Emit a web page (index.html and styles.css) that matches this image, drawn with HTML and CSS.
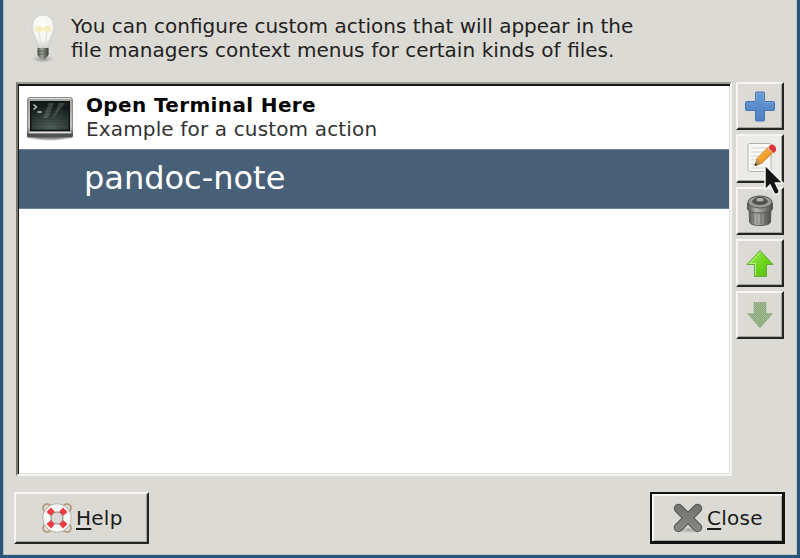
FILE: index.html
```html
<!DOCTYPE html>
<html lang="en">
<head>
<meta charset="utf-8">
<title>Custom Actions</title>
<link rel="stylesheet" href="styles.css">
</head>
<body>
<main class="window">
  <header class="intro">
    <svg class="bulb" width="32" height="52" viewBox="0 0 32 52">
      <defs>
        <radialGradient id="glass" cx=".5" cy=".35" r=".65"><stop offset="0" stop-color="#fff"/><stop offset=".65" stop-color="#f3f3f0"/><stop offset="1" stop-color="#d0d0cd"/></radialGradient>
        <linearGradient id="cap"><stop offset="0" stop-color="#4b5049"/><stop offset=".4" stop-color="#a3a99d"/><stop offset="1" stop-color="#30342f"/></linearGradient>
        <radialGradient id="shade"><stop offset="0" stop-color="#555" stop-opacity=".6"/><stop offset="1" stop-color="#777" stop-opacity="0"/></radialGradient>
      </defs>
      <ellipse cx="16" cy="46" rx="11" ry="4" fill="url(#shade)"/>
      <path d="M16 2C9 2 5 7.500 5 14c0 7 5 11 5.500 21h11C22 25 27 21 27 14 27 7.500 23 2 16 2z" fill="url(#glass)" stroke="#cfcfcc" stroke-width="1"/>
      <path d="M12 17l2 17M20 17l-2 17" fill="none" stroke="#e0e0dc"/>
      <ellipse cx="12" cy="16" rx="4" ry="3" fill="#f5efbd"/><ellipse cx="20" cy="16" rx="4" ry="3" fill="#f5efbd"/>
      <path d="M10.500 35h11v7l-2.500 3-3 1.500-3-1.500-2.500-3z" fill="url(#cap)"/><path d="M10.500 38.500l11-1M10.500 41.500l11-1" stroke="#555c50" stroke-width=".8"/>
    </svg>
    <p class="message"><span class="line-one">You can configure custom actions that will appear in the</span><br><span class="line-two">file managers context menus for certain kinds of files.</span></p>
  </header>

  <section class="editor">
    <div class="list">
      <div class="row">
        <svg class="terminal" width="50" height="46" viewBox="0 0 50 46">
          <defs>
            <linearGradient id="frame" x2="0" y2="1"><stop offset="0" stop-color="#a2a39f"/><stop offset=".8" stop-color="#c4c5c1"/><stop offset="1" stop-color="#777"/></linearGradient>
            <radialGradient id="screen" cx=".5" cy="1" r=".9"><stop offset="0" stop-color="#556660"/><stop offset=".6" stop-color="#2f3b38"/><stop offset="1" stop-color="#151d1c"/></radialGradient>
            <radialGradient id="drop"><stop offset=".5" stop-color="#333" stop-opacity=".55"/><stop offset="1" stop-color="#777" stop-opacity="0"/></radialGradient>
          </defs>
          <ellipse cx="25" cy="41" rx="25" ry="4" fill="url(#drop)"/>
          <rect x="2" y="34" width="46" height="7.500" rx="1.500" fill="#50524f"/>
          <rect x="2.500" y="1.500" width="45" height="36" rx="2.500" fill="url(#frame)" stroke="#888a86"/>
          <path d="M4 2.500h42M4 36.500h42" stroke="#dfe0dc"/>
          <rect x="5" y="5" width="40" height="30" fill="#111615"/>
          <rect x="6.500" y="6.500" width="37" height="27" fill="url(#screen)"/>
          <path d="M24 7h5l-6 15h-5zM34 7h6L27 24z" fill="#839188" opacity=".35"/>
          <path d="M7 11h36M7 14h36M7 17h36M7 20h36M7 23h36M7 26h36M7 29h36M7 32h36" stroke="#0d1715" opacity=".18"/>
          <path d="M8.500 8.500l3 2.500-3 2.500M12.500 16h4" fill="none" stroke="#c7cdc6" stroke-width="1.400"/>
        </svg>
        <div class="description"><div class="name">Open Terminal Here</div><div class="detail">Example for a custom action</div></div>
      </div>
      <div class="row selected"><span>pandoc-note</span></div>
    </div>

    <nav class="tools">
      <button class="tool" aria-label="Add"><svg width="32" height="32" viewBox="0 0 32 32"><defs><linearGradient id="blue" x2="0" y2="1"><stop offset="0" stop-color="#6d9bd3"/><stop offset="1" stop-color="#4a7fc2"/></linearGradient></defs><path d="M12.500 2h7q1 0 1 1v8.500h9q1 0 1 1v7q0 1-1 1h-9V30q0 1-1 1h-7q-1 0-1-1v-9.500h-9q-1 0-1-1v-7q0-1 1-1h9V3q0-1 1-1z" fill="url(#blue)" stroke="#4674b0"/><path d="M12.500 12V3.500h7V12.500H29" fill="none" stroke="#7ba4d7"/></svg></button>
      <button class="tool hover" aria-label="Edit">
        <svg width="32" height="32" viewBox="0 0 32 32"><defs><linearGradient id="pencil" x1="0" y1="0" x2="1" y2="1"><stop offset="0" stop-color="#fcc65a"/><stop offset=".5" stop-color="#f7a32d"/><stop offset="1" stop-color="#ce7319"/></linearGradient></defs><rect x="4" y="1.500" width="23" height="28" rx="1.500" fill="#f8f8f7" stroke="#b2b2af"/><path d="M7 6h16M7 10h15M7 14h12M7 18h9M7 22h7M7 26h15" stroke="#d5d5d2"/><path d="M11 23.500l2-7L25 4.500l5 5-12.500 12z" fill="url(#pencil)" stroke="#c97a22" stroke-width=".8"/><path d="M10.500 24l2.500-7 4.500 4.500z" fill="#b89057"/><path d="M10.500 24l1-3 2 2z" fill="#29231c"/><path d="M23.500 6l2-2 5 5-2 2z" fill="#d8d8d3"/><path d="M25 4.500q2.500-3.500 5.500-.8t.8 6l-1.800 1.300-4.500-4.500z" fill="#e3343c"/></svg>
        <svg class="pointer" width="22" height="34" viewBox="0 0 22 34"><path d="M2 2v25l5-5 4 8q1 2 3.500 1t1.500-3.500L12.500 20H20z" fill="#151515" stroke="#f6f6f4" stroke-width="1.500"/></svg>
      </button>
      <button class="tool" aria-label="Delete"><svg width="32" height="32" viewBox="0 0 32 32"><defs><linearGradient id="bin"><stop offset="0" stop-color="#555753"/><stop offset=".35" stop-color="#b5b6b3"/><stop offset=".65" stop-color="#858784"/><stop offset="1" stop-color="#484a47"/></linearGradient></defs><path d="M5 13l.5 14q1 3.500 10.500 3.500T26.500 27L27 13z" fill="url(#bin)" stroke="#5a5c58"/><path d="M9 17l.5 11M13 18v11M17 18v11M21 18v11M24 17l-.5 10" stroke="#555753" opacity=".6"/><path d="M3.500 8v6q2 4 12.500 4t12.500-4V8z" fill="url(#bin)" stroke="#555753"/><ellipse cx="16" cy="7" rx="12" ry="6" fill="#999b97" stroke="#555753"/><ellipse cx="16" cy="6.500" rx="8" ry="3.500" fill="#555753"/><path d="M11 5q0-3 5-3t5 3v2q-5 2-10 0z" fill="#777975" stroke="#3b3d3a"/><ellipse cx="16" cy="4.500" rx="3" ry="1.500" fill="#b5b6b3"/></svg></button>
      <button class="tool" aria-label="Move up"><svg width="32" height="32" viewBox="0 0 32 32"><defs><linearGradient id="green" x2="1" y2="1"><stop offset="0" stop-color="#a7ed65"/><stop offset=".55" stop-color="#69d519"/><stop offset="1" stop-color="#57b914"/></linearGradient></defs><path d="M16 3.500L29 17.500h-6.500v12h-12v-12H3z" fill="url(#green)" stroke="#64ad32" stroke-linejoin="round"/><path d="M16 5.500L5.500 16.500h6v12" fill="none" stroke="#b9ef8b"/></svg></button>
      <button class="tool" aria-label="Move down" disabled><svg width="32" height="32" viewBox="0 0 32 32"><defs><pattern id="stipple" width="2" height="2" patternUnits="userSpaceOnUse"><path d="M0 0h2v2H0z" fill="#a9bf9a"/><path d="M0 0h1v1H0zM1 1h1v1H1z" fill="#82a16f"/></pattern></defs><path d="M10 3.500h12v11h6.500L16 29 3.500 14.500H10z" fill="url(#stipple)" stroke="#8fa785" stroke-dasharray="1 1"/></svg></button>
    </nav>
  </section>

  <footer class="actions">
    <button class="action help">
      <svg width="32" height="32" viewBox="0 0 32 32"><g fill="none" stroke="#ad9568" stroke-width="1.600"><circle cx="6" cy="6" r="4"/><circle cx="26" cy="6" r="4"/><circle cx="6" cy="26" r="4"/><circle cx="26" cy="26" r="4"/></g><circle cx="16" cy="16" r="10" fill="none" stroke="#a5a6a2" stroke-width="9"/><circle cx="16" cy="16" r="10" fill="none" stroke="#fafaf8" stroke-width="7.500"/><path d="M5.500 10l4.500-4.500 4.500 5-4 4zM22 5.500l4.500 4.500-5 4.500-4-4zM5.500 22l5-4.500 4 4-4.500 5zM21.500 17.500l5 4.500-4.500 4.500-4.500-5z" fill="#f03b42"/><circle cx="16" cy="16" r="6" fill="#dcdad5" stroke="#92938e"/></svg><span class="label"><span class="key">H</span>elp</span>
    </button>
    <button class="action close">
      <svg width="32" height="32" viewBox="0 0 32 32"><defs><linearGradient id="cross" x2="0" y2="1"><stop offset="0" stop-color="#737571"/><stop offset="1" stop-color="#858784"/></linearGradient><radialGradient id="cast"><stop offset="0" stop-color="#777" stop-opacity=".6"/><stop offset="1" stop-color="#999" stop-opacity="0"/></radialGradient></defs><ellipse cx="17" cy="28" rx="13" ry="3.500" fill="url(#cast)"/><g stroke-linecap="round" fill="none"><path d="M6.500 6.500l19 19M25.500 6.500l-19 19" stroke="#555753" stroke-width="9.500"/><path d="M6.500 6.500l19 19M25.500 6.500l-19 19" stroke="url(#cross)" stroke-width="7.200"/></g></svg><span class="label"><span class="key">C</span>lose</span>
    </button>
  </footer>
</main>
</body>
</html>
```
FILE: styles.css
```css
* { box-sizing: border-box; }
body { margin: 0; font: 20px/24px "DejaVu Sans", sans-serif; color: #1b1b1b; }
.window {
  height: 558px;
  padding: 0 12px 0 10px;
  background: #dcdad5;
  border: solid #27557b;
  border-width: 0 3px 3px;
  box-shadow: inset 1px 0 #b5bcbe, inset -1px -1px #c6c9c8;
}
svg { display: block; flex: none; }
.intro { display: flex; height: 82px; padding: 13px 0 0 14px; }
.message { margin: 1px 0 0 12px; white-space: nowrap; color: #222; }
.line-two { word-spacing: .25px; }
.editor { display: flex; gap: 4px; padding-left: 3px; }
.list {
  width: 716px;
  height: 394px;
  background: #fff;
  border: 2px solid;
  border-color: #9c9b90 #f5f4f1 #f5f4f1 #77766e;
  box-shadow: inset 1px 2px #161616, inset -1px -1px #e3e2de;
  padding: 2px 1px 1px;
}
.row { display: flex; height: 63px; }
.terminal { margin: 10px 0 0 6px; }
.description { margin: 7px 0 0 11px; white-space: nowrap; }
.name { font-weight: 700; color: #050505; letter-spacing: .36px; }
.detail { color: #333; letter-spacing: .15px; }
.selected { height: 60px; background: #486077; color: #fff; font-size: 32px; line-height: 57px; padding-left: 65px; border: solid #718397; border-width: 1px 0; }
.tools { display: flex; flex-direction: column; gap: 4px; }
button { margin: 0; padding: 0; font: inherit; color: #1b1b1b; display: flex; align-items: center; background: #dcdad5; border: 2px solid; border-color: #f6f5f3 #252525 #252525 #f6f5f3; box-shadow: inset -1px -1px #a9a79d; }
.tool { position: relative; width: 48px; height: 48.300px; justify-content: center; }
.hover { background: #edebe8; }
.pointer { position: absolute; left: 25px; top: 27px; z-index: 2; }
.actions { display: flex; justify-content: space-between; padding: 16px 0 0 1px; }
.action { height: 52px; gap: 3px; }
.label { letter-spacing: .25px; }
.help { width: 135px; padding-left: 25px; }
.close { width: 135px; padding-left: 20px; border-color: #111; border-width: 2px 3px 3px 2px; box-shadow: inset 2px 2px #f6f5f3, inset -1px -1px #aaa89f; }
.key { text-decoration: underline; text-decoration-thickness: 1.500px; text-underline-offset: 3px; }
```
